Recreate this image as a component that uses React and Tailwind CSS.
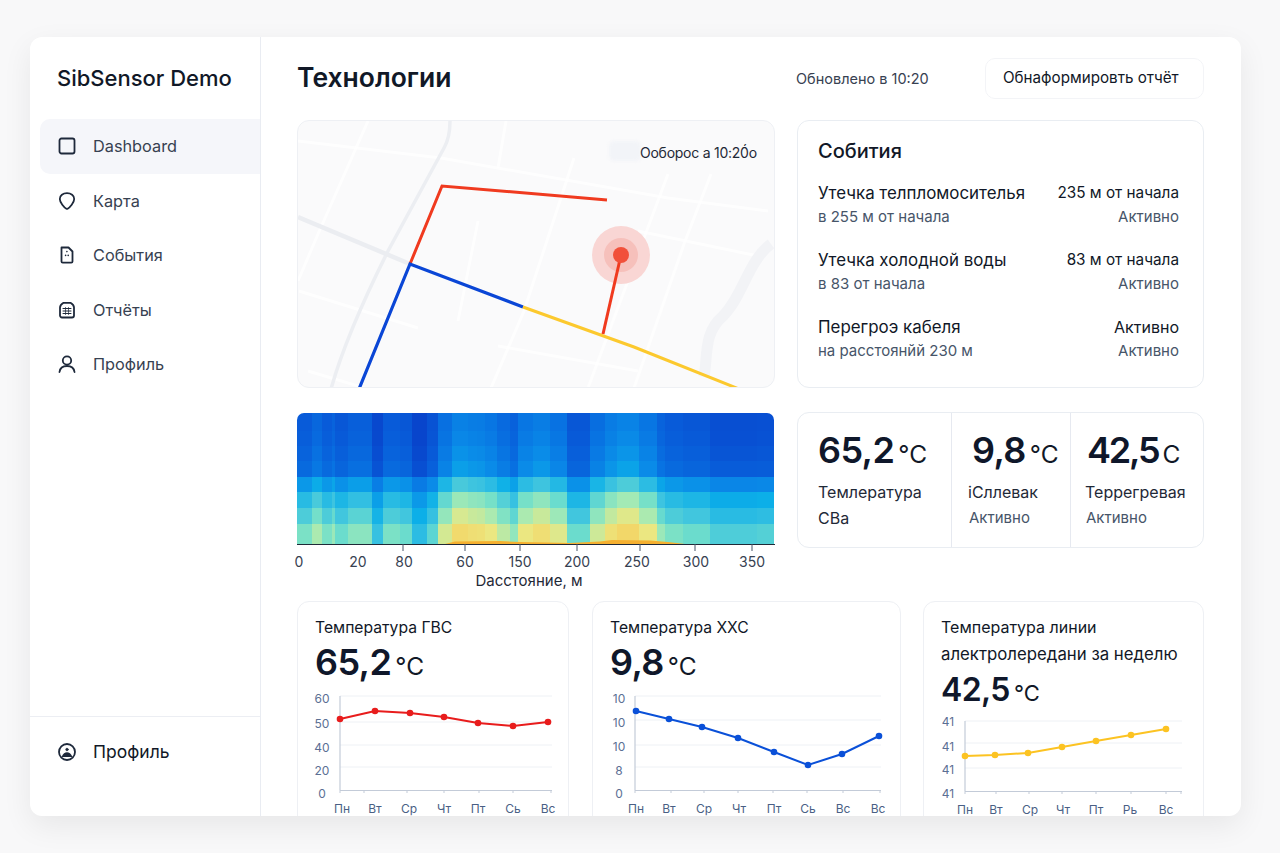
import React from "react";

const ramp = [
  [0, [8, 62, 200]], [0.1, [8, 90, 216]], [0.2, [8, 115, 226]], [0.3, [10, 140, 232]],
  [0.4, [12, 175, 232]], [0.5, [60, 195, 224]], [0.6, [110, 222, 204]], [0.7, [165, 234, 180]], [0.82, [235, 232, 130]], [1, [246, 205, 90]],
];
function colorAt(v) {
  const t = Math.max(0, Math.min(1, v));
  for (let i = 1; i < ramp.length; i++) {
    if (t <= ramp[i][0]) {
      const [a, ca] = ramp[i - 1];
      const [b, cb] = ramp[i];
      const k = (t - a) / (b - a);
      return `rgb(${ca.map((c, j) => Math.round(c + (cb[j] - c) * k)).join(",")})`;
    }
  }
  return "rgb(246,205,90)";
}
// x edges in page px and an intensity per column
const cols = [
  [297, 0.35], [312, 0.5], [322, 0.35], [332, 0.45], [335, 0.3], [348, 0.4], [372, 0.12], [383, 0.35], [400, 0.3],
  [412, 0.08], [427, 0.25], [438, 0.62], [452, 0.85], [468, 0.8], [477, 0.78], [485, 0.7], [497, 0.55], [510, 0.42],
  [518, 0.7], [533, 0.8], [550, 0.65], [567, 0.3], [590, 0.6], [605, 0.78], [617, 0.88], [639, 0.7], [657, 0.45],
  [665, 0.35], [683, 0.3], [710, 0.2], [733, 0.2], [757, 0.22], [775, 0],
];
const rowsY = [413, 431, 446, 461, 477, 492, 508, 524, 544];
const rowFn = [[0, 0.3], [0, 0.33], [0.01, 0.36], [0.03, 0.38], [0.2, 0.38], [0.3, 0.45], [0.36, 0.5], [0.42, 0.58]];

function Heat() {
  return (
    <div className="w-[478px] h-[178px] relative">
      <svg width="478" height="178" viewBox="297 412 478 178" className="block overflow-visible font-['Inter',sans-serif]">
        <defs>
          <clipPath id="hc"><path d="M297 544V420a7 7 0 0 1 7-7H767a7 7 0 0 1 7 7V544Z" /></clipPath>
        </defs>
        <g clipPath="url(#hc)" shapeRendering="crispEdges">
          {rowFn.map(([b, g], r) =>
            cols.slice(0, -1).map(([x, i], c) => (
              <rect key={`${r}-${c}`} x={x} y={rowsY[r]} width={cols[c + 1][0] - x} height={rowsY[r + 1] - rowsY[r]} fill={colorAt(b + i * g)} />
            ))
          )}
        </g>
        <path d="M445 544L455 541.5L500 541L520 542L570 543L600 541.5L612 540L650 540.5L668 542L685 544Z" fill="#f5b030" />
        <line x1="297" y1="544.5" x2="775" y2="544.5" stroke="#1f2937" strokeWidth="1" />
        {[403, 465, 520, 577, 640, 695, 752].map((x) => (
          <line key={x} x1={x} y1="544" x2={x} y2="551" stroke="#475569" strokeWidth="1" />
        ))}
        {[["0", 299], ["20", 358], ["80", 404], ["60", 465], ["150", 520], ["200", 577], ["250", 637], ["300", 696], ["350", 752]].map(([t, x]) => (
          <text key={t} x={x} y="567" textAnchor="middle" fontSize="14" fill="#374151">{t}</text>
        ))}
        <text x="529" y="586" textAnchor="middle" fontSize="15" fill="#1f2937">Dасстояние, м</text>
      </svg>
    </div>
  );
}

function MapView() {
  const white = [
    "M70 0L20 113L0 160", "M208 0L200 47", "M276 37L226 190L193 267", "M370 53L340 133L290 267", "M413 53L386 123L336 267",
    "M0 20L143 37L370 77L470 90", "M1 170L120 207", "M200 225L340 250", "M10 250L70 268", "M180 100L160 200", "M340 110L460 135",
  ];
  return (
    <div className="relative w-[478px] h-[268px] rounded-[12px] border border-[#eef0f4] bg-[#fafafb] overflow-hidden">
      <svg width="478" height="268" viewBox="0 0 478 268" className="block" fill="none" strokeLinejoin="miter">
        {white.map((d) => <path key={d} d={d} stroke="#ffffff" strokeOpacity="0.75" strokeWidth="3" />)}
        <path d="M152 0C152 12 150 20 146 27L90 130C70 170 45 225 33 268" stroke="#eceef2" strokeWidth="3.5" />
        <path d="M0 96L112 143" stroke="#ebedf1" strokeWidth="4.5" />
        <path d="M473 123C450 140 445 175 425 195C405 212 410 235 406 256" stroke="#f2f3f6" strokeWidth="11" />
        <rect x="311" y="20" width="32" height="20" rx="5" fill="#f2f4f8" className="blur-[1.5px]" />
        <circle cx="323" cy="134" r="29" fill="#f9d6d4" />
        <circle cx="323" cy="134" r="17" fill="#f6c0bb" />
        <path d="M112 143L144 65L309 79" stroke="#f03a1f" strokeWidth="3" />
        <path d="M61 268L112 143L225 186" stroke="#0a46d6" strokeWidth="3.2" />
        <path d="M225 186L336 226L441 268" stroke="#fcc92e" strokeWidth="3" />
        <path d="M305 213L323 134" stroke="#f03a1f" strokeWidth="3" />
        <circle cx="323" cy="134" r="8" fill="#f1503a" />
      </svg>
      <span className="absolute left-[342px] top-[22px] text-[14px] leading-[20px] text-[#1f2937] tracking-[-0.25px]">Ооборос а 10:20́о</span>
    </div>
  );
}

function Chart({ vx, vy, w, h, axisX, axisR, grid, yLabels, yLabelX, pts, xLabels, color, r = 3.3, ticks }) {
  return (
    <svg width={w} height={h} viewBox={`${vx} ${vy} ${w} ${h}`} className="block overflow-visible font-['Inter',sans-serif]">
      {grid.map((y) => <line key={y} x1={axisX} y1={y} x2={axisR} y2={y} stroke="#eef1f5" strokeWidth="1" />)}
      <line x1={axisX} y1={grid[0]} x2={axisX} y2="790" stroke="#c3cbd8" strokeWidth="1.2" />
      <line x1={axisX} y1="790.5" x2={axisR} y2="790.5" stroke="#c3cbd8" strokeWidth="1.2" />
      {ticks.map((x) => <line key={x} x1={x} y1="790" x2={x} y2="793" stroke="#c3cbd8" strokeWidth="1" />)}
      {yLabels.map(([t, y], i) => (
        <text key={i} x={yLabelX} y={y + 4.5} textAnchor="middle" fontSize="12" fill="#5b6f94">{t}</text>
      ))}
      {xLabels.map(([t, x], i) => (
        <text key={i} x={x} y="813" textAnchor="middle" fontSize="12" fill="#4a5f85">{t}</text>
      ))}
      <polyline points={pts.map((p) => p.join(",")).join(" ")} fill="none" stroke={color} strokeWidth="2" />
      {pts.map((p, i) => <circle key={i} cx={p[0]} cy={p[1]} r={r} fill={color} />)}
    </svg>
  );
}

function Big({ n, u, className = "", numClass = "text-[36px] tracking-[-0.6px]", unitClass = "text-[24.5px]" }) {
  return (
    <div className={`h-[48px] flex items-baseline text-[#0f172a] ${className}`}>
      <span className={`leading-[44px] font-semibold ${numClass}`}>{n}</span>
      <span className={`ml-[4px] leading-[44px] text-[#111827] ${unitClass}`}>{u}</span>
    </div>
  );
}

const Ic = ({ children }) => (
  <svg width="20" height="20" viewBox="0 0 20 20" fill="none" stroke="#1e293b" strokeWidth="1.8" strokeLinejoin="round" strokeLinecap="round" className="shrink-0">
    {children}
  </svg>
);

const nav = [
  ["Dashboard", <rect key="a" x="2.5" y="2.5" width="15" height="15" rx="2" />],
  ["Карта", <path key="a" d="M10 2.2C14 2.2 17.2 4.6 17.2 8C17.2 11.5 12.8 16.5 10.6 17.8C10.2 18 9.8 18 9.4 17.8C7.2 16.5 2.8 11.5 2.8 8C2.8 4.6 6 2.2 10 2.2Z" />],
  ["События", <g key="a"><path d="M4.5 2.5H11.5L15.5 6.5V16.5a1.2 1.2 0 0 1-1.2 1.2H5.7A1.2 1.2 0 0 1 4.5 16.5Z" /><path d="M8.6 10.4h.01M11.2 10.4h.01M9.9 6.6h.01" strokeWidth="1.6" /></g>],
  ["Отчёты", <g key="a"><path d="M6.5 2.8H13.5C15.5 4 17 5.5 17 7.5V15.5a2 2 0 0 1-2 2H5a2 2 0 0 1-2-2V7.5C3 5.5 4.5 4 6.5 2.8Z" /><path d="M6 8.5H14M6 11H14M6 13.5H14" strokeWidth="1" /><path d="M8.5 7.5V14.5M11.5 7.5V14.5" strokeWidth="0.7" /></g>],
  ["Профиль", <g key="a"><circle cx="10" cy="6.5" r="4.2" /><path d="M2.5 18C3 14 6 12 10 12C14 12 17 14 17.5 18" /></g>],
];

function Sidebar() {
  return (
    <aside className="w-[231px] shrink-0 h-full border-r border-[#e9ecf2] flex flex-col">
      <div className="h-[82px] flex items-center pl-[27px] text-[22px] font-medium text-[#111827]">SibSensor Demo</div>
      <nav className="flex flex-col pl-[10px]">
        {nav.map(([t, icon], i) => (
          <div key={t} className={`h-[54.5px] flex items-center gap-[16px] pl-[17px] text-[16.3px] text-[#374151] ${i === 0 ? "bg-[#f5f6fa] rounded-l-[10px] text-[#334155]" : ""}`}>
            <Ic>{icon}</Ic>
            <span>{t}</span>
          </div>
        ))}
      </nav>
      <div className="mt-auto h-[100px] border-t border-[#eceef3] pl-[27px] pt-[21px]">
        <div className="h-[28px] flex items-center gap-[16px] text-[17.5px] text-[#111827]">
          <Ic>
            <circle cx="10" cy="10" r="8" />
            <circle cx="10" cy="7.5" r="1.3" fill="#1e293b" strokeWidth="0.6" />
            <path d="M4.5 15C6 11.5 8 10.2 10 10.2C12 10.2 14 11.5 15.5 15Z" fill="#1e293b" stroke="none" />
          </Ic>
          <span>Профиль</span>
        </div>
      </div>
    </aside>
  );
}

const events = [
  ["Утечка телпломосителья", "235 м от начала", "в 255 м от начала", "Активно", "text-[15.3px]"],
  ["Утечка холодной воды", "83 м от начала", "в 83 от начала", "Активно", "text-[15.3px]"],
  ["Перегроэ кабеля", "Активно", "на расстоянйй 230 м", "Активно", "text-[16px]"],
];

function Events() {
  return (
    <div className="w-[407px] h-[268px] rounded-[12px] border border-[#e9edf2] pl-[20px] pr-[24px]">
      <div className="h-[59px] mb-[2px] flex items-center text-[20px] font-medium text-[#111827]">Собития</div>
      {events.map(([a, b, c, d, sz]) => (
        <div key={a} className="h-[67px]">
          <div className="flex justify-between items-center text-[16.9px] leading-[22px] text-[#111827]"><span>{a}</span><span className={sz}>{b}</span></div>
          <div className="mt-[2px] flex justify-between text-[15px] leading-[22px] text-[#475569]"><span>{c}</span><span>{d}</span></div>
        </div>
      ))}
    </div>
  );
}

function Stats() {
  return (
    <div className="w-[407px] h-[136px] rounded-[12px] border border-[#e9edf2] flex">
      <div className="w-[154px] pl-[20px] pt-[15px] border-r border-[#e6e9f0]">
        <Big n="65,2" u="°C" />
        <div className="mt-[3px] text-[16px] leading-[26px] text-[#1f2937]">Темлература<br />СВа</div>
      </div>
      <div className="w-[119px] pl-[16px] pt-[15px] border-r border-[#e6e9f0]">
        <Big n="9,8" u="°C" className="ml-[4px]" />
        <div className="mt-[3px] text-[16px] leading-[26px] text-[#1f2937]">iСллевак</div>
        <div className="ml-[1px] text-[15px] leading-[26px] text-[#475569]">Активно</div>
      </div>
      <div className="pl-[14px] pt-[15px]">
        <Big n="42,5" u="C" className="ml-[2px]" numClass="text-[36px] tracking-[-2.2px]" />
        <div className="mt-[3px] text-[16px] leading-[26px] text-[#1f2937]">Террегревая</div>
        <div className="ml-[1px] text-[15px] leading-[26px] text-[#475569]">Активно</div>
      </div>
    </div>
  );
}

function Cards() {
  return (
    <div className="mt-[11px] flex">
      <div className="w-[272px] h-[230px] shrink-0 rounded-[12px] border border-[#eef0f4]">
        <div className="pl-[17px] pt-[14px] text-[15.7px] leading-[24px] text-[#111827]">Температура ГВС</div>
        <Big n="65,2" u="°C" className="pl-[17px] mb-[2px]" />
        <Chart vx={298} vy={690} w={270} h={130} axisX={340} axisR={552} grid={[696, 722, 745, 767]} color="#e81c1c"
          yLabels={[["60", 698], ["50", 723], ["40", 747], ["20", 770], ["0", 793]]} yLabelX={322}
          pts={[[340, 719], [375, 711], [410, 713], [444, 717], [478, 723], [513, 726], [548, 722]]}
          ticks={[340, 364, 407, 444, 479, 513, 551]}
          xLabels={[["Пн", 342], ["Вт", 375], ["Ср", 409], ["Чт", 444], ["Пт", 478], ["Сь", 513], ["Вс", 548]]} />
      </div>
      <div className="ml-[23px] w-[309px] h-[230px] shrink-0 rounded-[12px] border border-[#eef0f4]">
        <div className="pl-[17px] pt-[14px] text-[15.7px] leading-[24px] text-[#111827]">Температура ХХС</div>
        <Big n="9,8" u="°C" className="pl-[17px] mb-[2px]" />
        <Chart vx={593} vy={690} w={307} h={130} axisX={635} axisR={881} grid={[696, 720, 745, 767]} color="#0a50d8"
          yLabels={[["10", 698], ["10", 722], ["10", 746], ["8", 770], ["0", 793]]} yLabelX={619}
          pts={[[636, 711], [669, 719], [702, 727], [738, 738], [774, 752], [808, 765], [842, 754], [879, 736]]}
          ticks={[635, 671, 704, 738, 773, 807, 843, 880]}
          xLabels={[["Пн", 636], ["Вт", 669], ["Ср", 704], ["Чт", 739], ["Пт", 774], ["Сь", 808], ["Вс", 843], ["Вс", 878]]} />
      </div>
      <div className="ml-[22px] w-[281px] h-[230px] shrink-0 rounded-[12px] border border-[#eef0f4]">
        <div className="pl-[17px] pt-[12px] text-[16px] leading-[27px] text-[#111827]">Температура линии<br /><span className="text-[16.8px]">алектролередани за неделю</span></div>
        <Big n="42,5" u="°C" className="pl-[17px]" numClass="text-[32px] tracking-[-0.6px]" unitClass="text-[22px]" />
        <Chart vx={924} vy={715} w={279} h={105} axisX={965} axisR={1182} grid={[720, 742, 767]} color="#fcc322"
          yLabels={[["41", 720], ["41", 745], ["41", 768], ["41", 792]]} yLabelX={948}
          pts={[[965, 755], [995, 754], [1028, 752], [1062, 746], [1096, 740], [1131, 734], [1166, 728]]}
          ticks={[965, 996, 1029, 1062, 1096, 1131, 1166, 1181]}
          xLabels={[["Пн", 965], ["Вт", 996], ["Ср", 1030], ["Чт", 1063], ["Пт", 1096], ["Рь", 1130], ["Вс", 1166]]} />
      </div>
    </div>
  );
}

export default function App() {
  return (
    <div className="w-full h-[853px] bg-[#f8f8f9] pt-[37px] pl-[30px] overflow-hidden font-['Inter',sans-serif]">
      <div className="w-[1211px] h-[779px] bg-white rounded-[12px] shadow-[0_10px_30px_rgba(0,0,0,0.07)] flex overflow-hidden">
        <Sidebar />
        <main className="flex-1 min-w-0 pl-[36px] pr-[37px]">
          <header className="h-[83px] flex items-center">
            <h1 className="text-[26.5px] leading-[32px] mb-[3px] font-semibold text-[#111827] w-[499px]">Технологии</h1>
            <span className="text-[14.5px] text-[#374151] w-[189px]">Обновлено в 10:20</span>
            <div className="w-[219px] h-[41px] flex items-center pl-[17px] rounded-[10px] border border-[#f3f4f7] text-[15.2px] text-[#111827]">Обнаформировть отчёт</div>
          </header>
          <div className="flex gap-[22px]">
            <MapView />
            <Events />
          </div>
          <div className="mt-[24px] flex gap-[22px]">
            <Heat />
            <Stats />
          </div>
          <Cards />
        </main>
      </div>
    </div>
  );
}
